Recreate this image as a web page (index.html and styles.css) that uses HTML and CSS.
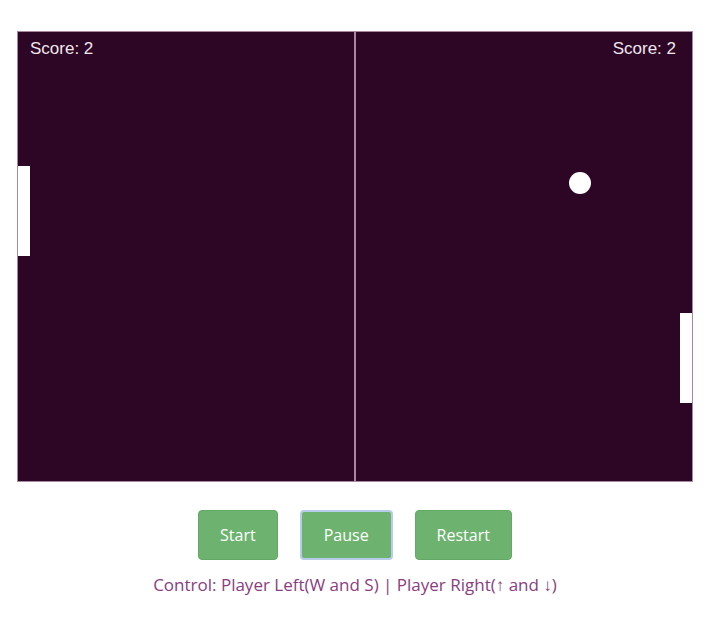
FILE: index.html
```html
<!DOCTYPE html>
<html>
  <head>
    <link rel="stylesheet" href="styles.css">
  </head>
  <body>
    <div class="game">
      <div id="board" class="board">
        <div class="scores">
          <span id="score-left">Score: 2</span>
          <span id="score-right">Score: 2</span>
        </div>
        <div class="net"></div>
        <div id="paddle-left" class="paddle paddle-left"></div>
        <div id="paddle-right" class="paddle paddle-right"></div>
        <div id="ball" class="ball"></div>
      </div>

      <div class="controls">
        <button class="game-button">Start</button>
        <button class="game-button focused">Pause</button>
        <button class="game-button">Restart</button>
      </div>

      <p class="help">Control: Player Left(W and S) | Player Right(↑ and ↓)</p>
    </div>
  </body>
</html>
```

FILE: styles.css
```css
/* Pong board and controls */
body {
  margin: 0;
  background: #ffffff;
  font-family: "Liberation Sans", Arial, sans-serif;
}

.game {
  width: 676px;
  margin: 31px 0 0 17px;
}

.board {
  position: relative;
  width: 674px;
  height: 449px;
  border: 1px solid #a986a3;
  background-color: #2c0624;
  overflow: hidden;
}

.scores {
  display: flex;
  justify-content: space-between;
  padding: 7px 16px 0 12px;
  color: #f0e6ee;
  font-size: 17px;
}

.net {
  position: absolute;
  left: 336px;
  top: 0;
  width: 2px;
  height: 100%;
  background-color: #a986a3;
}

.paddle {
  position: absolute;
  width: 12px;
  height: 90px;
  background-color: #ffffff;
}

.paddle-left {
  left: 0;
  top: 134px;
}

.paddle-right {
  right: 0;
  top: 281px;
}

.ball {
  position: absolute;
  left: 551px;
  top: 140px;
  width: 22px;
  height: 22px;
  border-radius: 50%;
  background-color: #ffffff;
}

.controls {
  display: flex;
  justify-content: center;
  gap: 22px;
  margin-top: 28px;
}

.game-button {
  height: 50px;
  padding: 0 21px;
  border: 1px solid #62a964;
  border-radius: 4px;
  background-color: #6db36f;
  color: #ffffff;
  font-family: "Open Sans", sans-serif;
  font-size: 16px;
  cursor: pointer;
}

.game-button.focused {
  border: 2px solid #b5cde8;
  padding: 0 22px;
}

.help {
  margin: 13px 0 0;
  text-align: center;
  color: #8a3d80;
  font-family: "Open Sans", sans-serif;
  font-size: 17px;
}
```
